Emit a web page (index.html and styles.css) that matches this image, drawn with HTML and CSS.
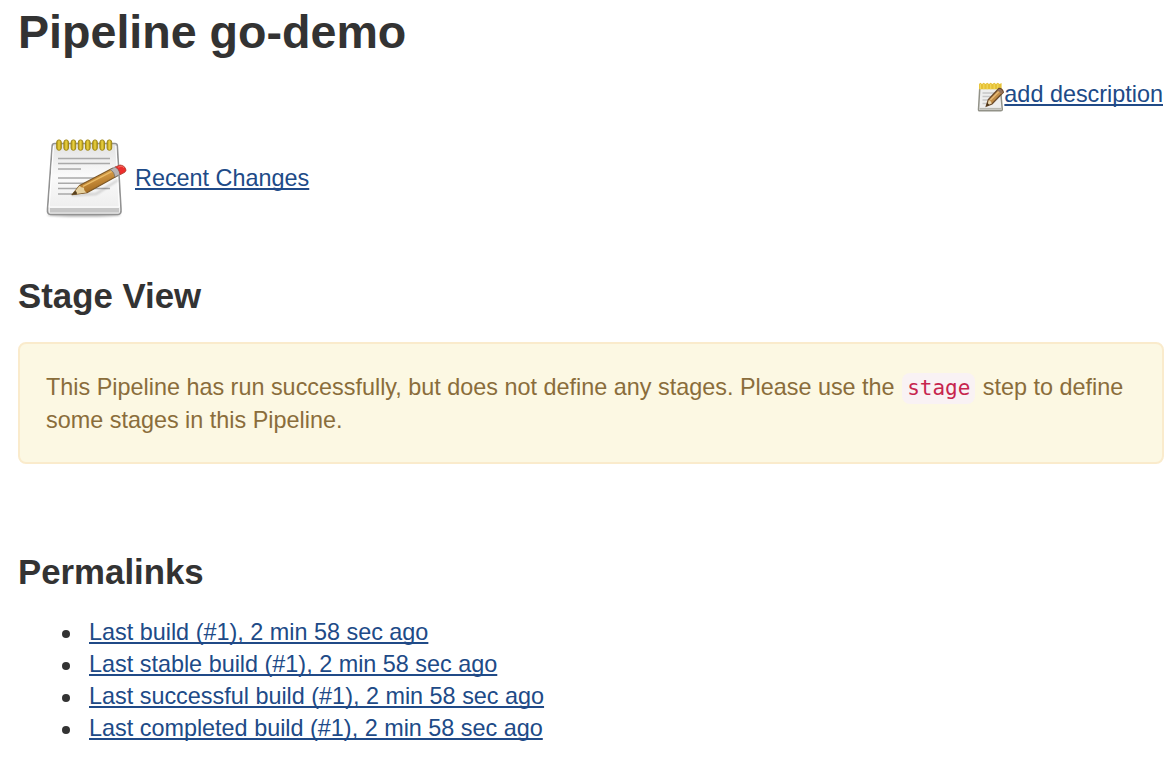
FILE: index.html
```html
<!DOCTYPE html>
<html lang="en">
<head>
<meta charset="utf-8">
<title>Pipeline go-demo</title>
<link rel="stylesheet" href="styles.css">
</head>
<body>
<svg class="defs" width="0" height="0" aria-hidden="true">
  <defs>
    <linearGradient id="paper" x1="0" y1="0" x2="0" y2="1"><stop offset="0" stop-color="#e2e2e2"/><stop offset=".45" stop-color="#fafafa"/><stop offset="1" stop-color="#ececec"/></linearGradient>
    <linearGradient id="wood" x1="0" y1="0" x2=".4" y2="1"><stop offset="0" stop-color="#e0ac55"/><stop offset=".5" stop-color="#cc913e"/><stop offset="1" stop-color="#9d651c"/></linearGradient>
    <linearGradient id="ring" x1="0" y1="0" x2="1" y2="0"><stop offset="0" stop-color="#b39610"/><stop offset=".5" stop-color="#ead243"/><stop offset="1" stop-color="#b39610"/></linearGradient>
    <filter id="soft" x="-20%" y="-100%" width="140%" height="300%"><feGaussianBlur stdDeviation="1.2"/></filter>
    <g id="ringshape"><rect x="-2.3" y="13.9" width="4.6" height="10.4" rx="2.3" fill="url(#ring)" stroke="#a08818" stroke-width="1"/></g>
    <symbol id="notepad" viewBox="0 0 100 100">
      <ellipse cx="48" cy="89" rx="37" ry="1.8" fill="#000" opacity=".3" filter="url(#soft)"/>
      <path d="M18.5 17.5H79Q81 17.5 81.3 19.5L85 83Q85.5 88.5 82 88.5H14.5Q11 88.5 11.5 83L16.2 19.5Q16.5 17.5 18.5 17.5Z" fill="url(#paper)" stroke="#929292" stroke-width="1.6"/>
      <path d="M17.5 20L13.2 81H83.3L79.8 20" fill="none" stroke="#fff" stroke-width="1.1"/>
      <path d="M14 84.3H83" stroke="#c6c6c6" stroke-width="4.5"/>
      <path d="M22 32.5H74M22 37.5H74M22 43H45M22 52H67M22 57.3H63M22 62.5H74M22 68H36" stroke="#a9a9a9" stroke-width="1.4"/>
      <use href="#ringshape" x="23"/><use href="#ringshape" x="30.2"/><use href="#ringshape" x="37.4"/><use href="#ringshape" x="44.6"/><use href="#ringshape" x="51.8"/><use href="#ringshape" x="59"/><use href="#ringshape" x="66.2"/><use href="#ringshape" x="73.4"/>
      <path d="M36 69L60 68L82 54" fill="none" stroke="#000" stroke-width="2" opacity=".18" filter="url(#soft)"/>
      <path d="M36 68.8L43.5 59.5L76.5 42.3Q80 43.5 81.5 49.8L51 66.8Z" fill="url(#wood)" stroke="#7c5726" stroke-width="1.1" stroke-linejoin="round"/>
      <path d="M36.5 68.4L43.5 59.8Q45 61.7 48 61.8Q47.8 65 50.5 66.4Z" fill="#e6d09e"/>
      <path d="M35.5 69L39.2 64.7Q41.2 65.6 41 68.2Z" fill="#57401f"/>
      <path d="M47 60.4L76 45.4" stroke="#eabc68" stroke-width="1.3"/>
      <path d="M74.2 43.5L79.3 40.9Q83.5 42.5 84.2 48.3L79 51.1Q78.5 45.5 74.2 43.5Z" fill="#b9b4b4" stroke="#777" stroke-width=".8"/>
      <path d="M79.3 40.9L84 39Q87 38.9 89 41.5Q91.2 44.5 88.8 46.3L84.2 48.7Q83.5 43 79.3 40.9Z" fill="#ed2d2d" stroke="#aa4030" stroke-width=".8"/>
      <path d="M82 41.3L85 40.2Q87 40.3 88 42" stroke="#f46a60" stroke-width="1" fill="none"/>
    </symbol>
    <symbol id="smallpad" viewBox="0 0 27 30">
      <path d="M2.9 4H23.2L25.3 27.5Q25.3 28.8 23.8 28.8H2.6Q1.4 28.8 1.5 27.5Z" fill="#eee" stroke="#929288" stroke-width="1.5"/>
      <path d="M2.5 26.8H24.3" stroke="#b8b8b2" stroke-width="1.8"/>
      <path d="M5.5 11H19M5.5 14.5H15M5.5 18H13M5.5 21.5H10" stroke="#c6c6c6" stroke-width="1.3"/>
      <path d="M2 2L3.4 .8L5 2L6.7 .8L8.5 2L10.2 .8L12 2L13.7 .8L15.5 2L17.2 .8L19 2L20.8 .8L22.6 2L24.6 1V7.2H2Z" fill="#e6c135"/>
      <path d="M3.4 2V7.2M6.8 2V7.2M10.2 2V7.2M13.7 2V7.2M17.2 2V7.2M20.8 2V7.2" stroke="#f1d75c" stroke-width="1.2"/>
      <path d="M9.4 24L11.4 17.5L21.9 6.5Q25 6.3 26.3 10.2L15 22Z" fill="#c18d47" stroke="#6b4a2c" stroke-width="1.4"/>
      <path d="M13.4 18L22.6 8.8" stroke="#e5b877" stroke-width="1.6"/>
      <path d="M10.4 23.3L11.8 18Q13.9 18.8 14.8 21.5Z" fill="#ead6ae"/>
      <path d="M9.2 24.2L10.3 20.8L12.3 22.9Z" fill="#453116"/>
      <path d="M22 7Q24.8 6.7 26 10.2L24.4 12.2Q23.2 9.5 20.3 8.7Z" fill="#92705a"/>
    </symbol>
  </defs>
</svg>
<main class="page">
  <h1 class="title">Pipeline go-demo</h1>
  <div class="description"><svg class="icon-small"><use href="#smallpad"/></svg><a class="link" href="#">add description</a></div>
  <div class="changes"><svg class="icon-large"><use href="#notepad"/></svg><a class="link" href="#">Recent Changes</a></div>
  <h2 class="heading">Stage View</h2>
  <div class="alert">This Pipeline has run successfully, but does not define any stages. Please use the <code class="code">stage</code> step to define<br>some stages in this Pipeline.</div>
  <h2 class="heading">Permalinks</h2>
  <ul class="permalinks">
    <li><a class="link" href="#">Last build (#1), 2 min 58 sec ago</a></li>
    <li><a class="link" href="#">Last stable build (#1), 2 min 58 sec ago</a></li>
    <li><a class="link" href="#">Last successful build (#1), 2 min 58 sec ago</a></li>
    <li><a class="link" href="#">Last completed build (#1), 2 min 58 sec ago</a></li>
  </ul>
</main>
</body>
</html>
```
FILE: styles.css
```css
* { box-sizing: border-box; }
body {
  margin: 0;
  background: #fff;
  color: #333;
  font-family: "Liberation Sans", Arial, sans-serif;
  font-size: 23.4px;
  line-height: 32px;
}
.defs { display: block; height: 0; }
.page { padding: 4px 12px 0 18px; }
.title { margin: 0; font-size: 46.6px; line-height: 56px; }
.description { display: flex; justify-content: flex-end; height: 32px; margin: 18px 1px 0 0; }
.icon-small { width: 27px; height: 30px; margin-top: 4px; }
.link {
  color: #204a87;
  text-decoration: underline;
  text-decoration-thickness: 2px;
  text-underline-offset: 2px;
  text-decoration-skip-ink: none;
}
.changes { display: flex; align-items: center; height: 100px; margin: 16px 0 0 18px; }
.changes .link { margin: 3px 0 0 -1px; }
.icon-large { width: 100px; height: 100px; }
.heading { margin: 50px 0 0; font-size: 34.8px; line-height: 40px; }
.alert {
  height: 122px;
  margin: 26px 0 38px;
  padding: 27px 26px;
  border: 2px solid #faebcc;
  border-radius: 8px;
  background: #fcf8e3;
  color: #8a6d3b;
  line-height: 33px;
  white-space: nowrap;
}
.code {
  margin: 0 1px;
  padding: 3px 5px 4px;
  border-radius: 8px;
  background: #f9f2f4;
  color: #c7254e;
  font-family: "DejaVu Sans Mono", monospace;
  font-size: 21px;
  line-height: 1;
}
.alert + .heading { margin-top: 88px; }
.permalinks { margin: 24px 0 0; padding: 0 0 0 44px; list-style: none; }
.permalinks li { display: flex; align-items: center; gap: 19px; }
.permalinks li::before {
  content: "";
  width: 8px;
  height: 8px;
  margin-top: 3px;
  border-radius: 50%;
  background: #333;
}
```
